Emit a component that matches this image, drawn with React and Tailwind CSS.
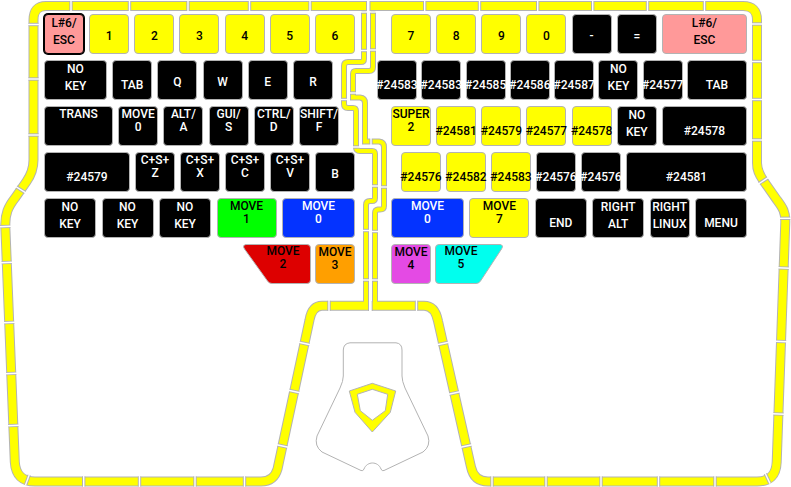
import clsx from "clsx";

const tones = {
  black: "bg-black text-white",
  yellow: "bg-[#ffff00] text-black",
  pink: "bg-[#ff9999] text-black",
  green: "bg-[#00ff00] text-black",
  blue: "bg-[#0433ff] text-white",
  orange: "bg-[#ff9f00] text-black",
  magenta: "bg-[#e44ae4] text-black",
};

const placements = {
  tight: "leading-[13px] pt-px",
  loose: "leading-[17px]",
  mid: "leading-4 pt-[13px]",
  low: "leading-4 pt-4",
};

const key = (lines, tone = "black", place = "mid", width = "w-10", extra = "") => ({
  lines: lines.split("|"),
  tone,
  place,
  width,
  extra,
});

const leftRows = [
  {
    width: "w-full",
    keys: [
      key("L#6/|ESC", "pink", "loose", "w-10", "border-black ring-1 ring-black"),
      key("1", "yellow"),
      key("2", "yellow"),
      key("3", "yellow"),
      key("4", "yellow"),
      key("5", "yellow"),
      key("6", "yellow"),
    ],
  },
  {
    width: "w-[289px]",
    keys: [
      key("NO|KEY", "black", "loose", "w-[63px]"),
      key("TAB", "black", "low"),
      key("Q"),
      key("W"),
      key("E"),
      key("R"),
    ],
  },
  {
    width: "w-[295px]",
    keys: [
      key("TRANS", "black", "tight", "w-[69px]"),
      key("MOVE|0", "black", "tight"),
      key("ALT/|A", "black", "tight"),
      key("GUI/|S", "black", "tight"),
      key("CTRL/|D", "black", "tight"),
      key("SHIFT/|F", "black", "tight"),
    ],
  },
  {
    width: "w-full",
    keys: [
      key("#24579", "black", "low", "w-[86px]"),
      key("C+S+|Z", "black", "tight"),
      key("C+S+|X", "black", "tight"),
      key("C+S+|C", "black", "tight"),
      key("C+S+|V", "black", "tight"),
      key("B"),
    ],
  },
  {
    width: "w-full",
    keys: [
      key("NO|KEY", "black", "loose", "w-[52px]"),
      key("NO|KEY", "black", "loose", "w-[52px]"),
      key("NO|KEY", "black", "loose", "w-[52px]"),
      key("MOVE|1", "green", "tight", "w-[60px]"),
      key("MOVE|0", "blue", "tight", "w-[73px]"),
    ],
  },
];

const rightRows = [
  {
    width: "w-[356px]",
    keys: [
      key("7", "yellow"),
      key("8", "yellow"),
      key("9", "yellow"),
      key("0", "yellow"),
      key("-"),
      key("="),
      key("L#6/|ESC", "pink", "loose", "w-[85px]"),
    ],
  },
  {
    width: "w-full",
    keys: [
      key("#24583", "black", "low"),
      key("#24583", "black", "low"),
      key("#24585", "black", "low"),
      key("#24586", "black", "low"),
      key("#24587", "black", "low"),
      key("NO|KEY", "black", "loose"),
      key("#24577", "black", "low"),
      key("TAB", "black", "low", "w-[60px]"),
    ],
  },
  {
    width: "w-[356px]",
    keys: [
      key("SUPER|2", "yellow", "tight"),
      key("#24581", "yellow", "low"),
      key("#24579", "yellow", "low"),
      key("#24577", "yellow", "low"),
      key("#24578", "yellow", "low"),
      key("NO|KEY", "black", "loose"),
      key("#24578", "black", "low", "w-[85px]"),
    ],
  },
  {
    width: "w-[346px]",
    keys: [
      key("#24576", "yellow", "low"),
      key("#24582", "yellow", "low"),
      key("#24583", "yellow", "low"),
      key("#24576", "black", "low"),
      key("#24576", "black", "low"),
      key("#24581", "black", "low", "w-[121px]"),
    ],
  },
  {
    width: "w-[356px]",
    keys: [
      key("MOVE|0", "blue", "tight", "w-[73px]"),
      key("MOVE|7", "yellow", "tight", "w-[60px]"),
      key("END", "black", "low", "w-[52px]"),
      key("RIGHT|ALT", "black", "loose", "w-[52px]"),
      key("RIGHT|LINUX", "black", "loose"),
      key("MENU", "black", "low", "w-[52px]"),
    ],
  },
];

function Key({ lines, tone, place, width, extra }) {
  return (
    <button
      type="button"
      className={clsx(
        "flex h-10 min-w-0 flex-col items-center rounded-[4px] border whitespace-nowrap",
        !extra && "border-[#b3b3b3]",
        tones[tone],
        placements[place],
        width,
        extra
      )}
    >
      {lines.map((line, i) => (
        <span key={i}>{line}</span>
      ))}
    </button>
  );
}

function ThumbKey({ lines, fill, shape, className }) {
  return (
    <button
      type="button"
      className={clsx(
        "relative flex h-10 w-[68px] min-w-0 flex-col items-center pt-px leading-[13px] text-black",
        className
      )}
    >
      <svg viewBox="0 0 68 40" className="absolute inset-0 h-full w-full" aria-hidden="true">
        <path d={shape} fill={fill} stroke="#b3b3b3" />
      </svg>
      {lines.map((line) => (
        <span key={line} className="relative">
          {line}
        </span>
      ))}
    </button>
  );
}

function Row({ width, keys }) {
  return (
    <div className={clsx("flex justify-between", width)}>
      {keys.map((k, i) => (
        <Key key={i} {...k} />
      ))}
    </div>
  );
}

// Wide strips run round the outside of each half; narrow ones follow the split.
const wideStrips = [
  "M366.5 6H46Q33.5 6 33.5 20V160C33.5 169 31 175 26.500 181.500L15 198C8 207 5 214 5.300 226L14.800 462Q16 481.500 35 481.500H261Q274 481.500 277.500 469L309.500 320Q312 305.800 322 305.800H368.500",
  "M370 6H743Q757 6 757 20V163C757 170 759 174 763.300 180.500L777 200C783 208 785.500 212 785.300 222L776.700 462Q776 481.500 757 481.500H488Q474 481.500 471 467L438 321Q435 305.800 424 305.800H372",
];

const narrowStrips = [
  "M364 12V59Q364 62 361 62H348Q344 62 344 66V104Q344 108 348 108H353Q356 108 356 111V147Q356 151 360 151H372Q375 151 375 154V198Q375 201 372 201H370Q366 201 366 205V302",
  "M373 12V67Q373 71 369 71H356Q353 71 353 74V97.500H360Q365 98 365 103V141.500H379Q384 142 384 147V206Q384 209.500 380 209.500H378Q375 210 375 213V302",
];

// Breaks between neighbouring lights: x, y, angle of the strip, strip width.
const breaks = [
  [71, 6, 0, 12], [129.500, 6, 0, 12], [188, 6, 0, 12], [249.500, 6, 0, 12], [310, 6, 0, 12],
  [33.500, 24.500, 90, 12], [33.500, 79, 90, 12], [33.500, 135, 90, 12],
  [20.700, 189.700, 122, 12], [5.300, 226.500, 88, 12], [6.700, 262.500, 88, 12],
  [9.200, 322.500, 88, 12], [11.200, 373.500, 88, 12], [13.300, 425.500, 88, 12],
  [27.500, 479.700, 20, 12], [83.700, 481.500, 0, 12], [139.500, 481.500, 0, 12],
  [195, 481.500, 0, 12], [244.500, 481.500, 0, 12],
  [282.500, 446, 102, 12], [294.200, 391.500, 102, 12], [304.600, 343.500, 102, 12],
  [329, 305.800, 0, 12],
  [424.700, 6, 0, 12], [479.500, 6, 0, 12], [537.700, 6, 0, 12], [592.700, 6, 0, 12],
  [647.500, 6, 0, 12], [704.500, 6, 0, 12],
  [757, 24, 90, 12], [757, 61.500, 90, 12], [757, 99.500, 90, 12], [757, 140, 90, 12],
  [763.400, 180.700, 57, 12], [785.300, 218.300, 90, 12], [783.700, 268, 92, 12],
  [781.100, 341.500, 92, 12], [778.500, 414, 92, 12],
  [767.500, 478.200, 155, 12], [715, 481.500, 0, 12], [658.500, 481.500, 0, 12],
  [601, 481.500, 0, 12], [546, 481.500, 0, 12], [492, 481.500, 0, 12],
  [466.500, 446, 78, 12], [454.300, 393, 78, 12], [443, 343.500, 78, 12],
  [416.500, 305.800, 0, 12],
  [364, 12, 90, 7], [364, 50.500, 90, 7], [344, 99.500, 90, 7], [356, 147, 90, 7],
  [375, 186, 90, 7], [366, 230.500, 90, 7], [366, 280, 90, 7],
  [373, 12, 90, 7], [373, 50, 90, 7], [353, 93, 90, 7], [371, 141.500, 0, 7],
  [384, 187, 90, 7], [375, 231.500, 90, 7], [375, 280, 90, 7],
];

function CaseDrawing() {
  return (
    <svg viewBox="0 0 791 487" className="h-auto w-full [grid-area:1/1]" aria-hidden="true" fill="none">
      <g stroke="#b3b3b3">
        {narrowStrips.map((d) => (
          <path key={d} d={d} strokeWidth="6" />
        ))}
        {wideStrips.map((d) => (
          <path key={d} d={d} strokeWidth="10" />
        ))}
      </g>
      <g stroke="#ffff00">
        {narrowStrips.map((d) => (
          <path key={d} d={d} strokeWidth="4" />
        ))}
        {wideStrips.map((d) => (
          <path key={d} d={d} strokeWidth="8" />
        ))}
      </g>
      <path d="M366.500 1V11M370 1V11M368.500 301V311M372.200 301V311" stroke="#b3b3b3" />
      {breaks.map(([x, y, angle, size]) => (
        <g key={`${x}-${y}`} transform={`translate(${x} ${y}) rotate(${angle})`}>
          <rect x="-1.700" y={1 - size / 2} width="3.400" height={size - 2} fill="#b3b3b3" />
          <rect x="-0.700" y={-size / 2} width="1.400" height={size} fill="#fff" />
        </g>
      ))}
      <path
        d="M350 342.800H396Q402 343.500 402 350V376Q402 381 405 388L428 436Q431 446 423 452L384 470.500Q382 471.500 381 469C378 461 367 461 364 469Q363 471.500 361 470.500L322 452Q314 446 317 436L340 388Q343.300 381 343.300 376V350Q343.500 343.500 350 342.800Z"
        fill="#fff"
        stroke="#b3b3b3"
      />
      <path
        d="M349.300 391L372.300 383.300L395.700 391L390.300 412.300L372.300 432L355 412.300ZM357.300 394.300L360.300 410.700L372.300 420.300L385.300 410.700L387.700 394.300L372.300 389.300Z"
        fill="#ffff00"
        fillRule="evenodd"
        stroke="#b3b3b3"
      />
    </svg>
  );
}

export default function App() {
  return (
    <main className="mx-auto grid w-full max-w-[791px] bg-white font-[Roboto,sans-serif] text-[12px] font-medium">
      <CaseDrawing />
      <div className="flex justify-between px-11 pt-[14px] [grid-area:1/1]">
        <section aria-label="Left half" className="flex w-[311px] min-w-0 flex-col gap-[6px]">
          {leftRows.map((row, i) => (
            <Row key={i} {...row} />
          ))}
          <div className="flex justify-end gap-1">
            <ThumbKey
              lines={["MOVE", "2"]}
              fill="#dd0000"
              shape="M3 .5H64Q67.500.5 67.500 4V36Q67.500 39.500 64 39.500H29Q26 39.500 24.500 37L1.500 5Q-1 1 3 .5Z"
              className="pl-3"
            />
            <Key {...key("MOVE|3", "orange", "tight")} />
          </div>
        </section>
        <section aria-label="Right half" className="flex w-[370px] min-w-0 flex-col items-end gap-[6px]">
          {rightRows.map((row, i) => (
            <Row key={i} {...row} />
          ))}
          <div className="flex w-[356px] gap-1">
            <Key {...key("MOVE|4", "magenta", "tight")} />
            <ThumbKey
              lines={["MOVE", "5"]}
              fill="#00ffee"
              shape="M65 .5H4Q.5.5.5 4V36Q.5 39.500 4 39.500H41Q44 39.500 45.500 37L66.500 5Q69 1 65 .5Z"
              className="pr-4"
            />
          </div>
        </section>
      </div>
    </main>
  );
}
